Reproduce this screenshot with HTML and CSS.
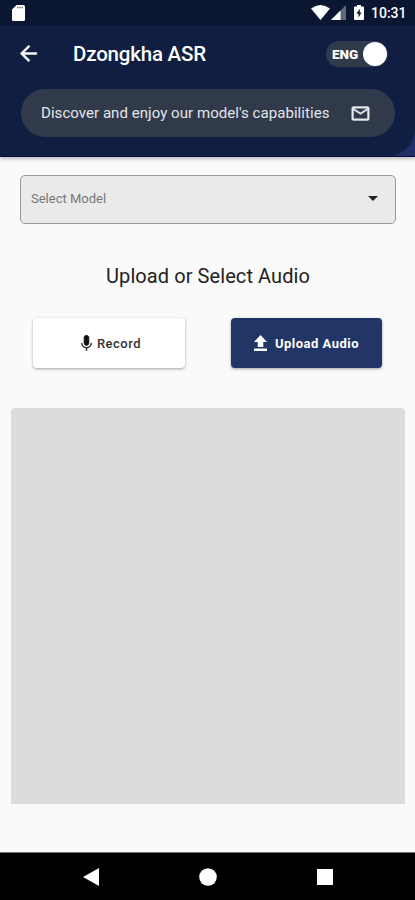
FILE: index.html
```html
<!DOCTYPE html>
<html lang="en">
<head>
  <meta charset="UTF-8" />
  <meta name="viewport" content="width=device-width, initial-scale=1.0" />
  <title>Dzongkha ASR</title>
  <link rel="stylesheet" href="styles.css">
</head>
<body>

  <div class="header-wrap">
    <header class="header">
      <!-- Status bar -->
      <div class="status-bar">
        <svg class="sd-card" width="13" height="16" viewBox="0 0 13 16">
          <path d="M4.6 0H11.5Q13 0 13 1.5V14.5Q13 16 11.5 16H1.500Q0 16 0 14.500V4.500Z" fill="#fff" />
          <path d="M5 2.500H11.500" stroke="#777" stroke-width="1.500" stroke-dasharray="1.500 .7" />
        </svg>
        <div class="status-icons">
          <svg width="19" height="15" viewBox="0 0 19 15">
            <path d="M0 3.600Q9.500-3.600 19 3.600L9.500 15Z" fill="#fff" />
          </svg>
          <svg class="signal" width="15" height="15" viewBox="0 0 15 15">
            <path d="M0 15L15 0V15Z" fill="#5d687c" />
            <path d="M0 15L9.500 5.500V15Z" fill="#fff" />
          </svg>
          <svg class="battery" width="10" height="15" viewBox="0 0 10 15">
            <path d="M3 0H7V1.500H9Q10 1.500 10 2.500V14Q10 15 9 15H1Q0 15 0 14V2.500Q0 1.500 1 1.500H3Z" fill="#fff" />
            <path d="M5.800 3.800L2.500 8.800H4.500V12.500L7.600 7.500H5.800Z" fill="#0b1730" />
          </svg>
          <span class="clock">10:31</span>
        </div>
      </div>

      <!-- App bar -->
      <div class="app-bar">
        <svg class="back" width="25" height="25" viewBox="0 0 24 24">
          <path d="M20 11H7.830l5.590-5.590L12 4l-8 8 8 8 1.410-1.410L7.830 13H20v-2z" fill="#fff" stroke="#fff" stroke-width=".4" />
        </svg>
        <h1 class="title">Dzongkha ASR</h1>
        <div class="lang-switch">
          <span class="lang">ENG</span>
          <span class="knob"></span>
        </div>
      </div>

      <div class="banner">
        <span class="banner-text">Discover and enjoy our model's capabilities</span>
        <svg width="21" height="21" viewBox="0 0 24 24">
          <path d="M20 4H4c-1.100 0-1.990.9-1.990 2L2 18c0 1.100.9 2 2 2h16c1.100 0 2-.9 2-2V6c0-1.100-.9-2-2-2zm0 14H4V8l8 5 8-5v10zm-8-7L4 6h16l-8 5z" fill="#e8eaed" stroke="#e8eaed" stroke-width=".5" />
        </svg>
      </div>
    </header>
  </div>

  <main class="content">
    <div class="select">
      <span class="placeholder">Select Model</span>
      <svg width="10" height="5" viewBox="0 0 10 5">
        <path d="M0 0H10L5 5Z" fill="#222" />
      </svg>
    </div>

    <h2 class="heading">Upload or Select Audio</h2>

    <div class="buttons">
      <button class="btn btn-record">
        <svg width="11" height="16" viewBox="5 2 14 20">
          <path d="M12 15c1.660 0 3-1.340 3-3V5c0-1.660-1.340-3-3-3S9 3.340 9 5v7c0 1.660 1.340 3 3 3z" fill="#111" stroke="#111" />
          <path d="M17.300 12c0 3-2.540 5.100-5.300 5.100S6.700 15 6.700 12H5c0 3.410 2.720 6.230 6 6.720V22h2v-3.280c3.280-.48 6-3.300 6-6.720h-1.700z" fill="#333" />
        </svg>
        <span>Record</span>
      </button>
      <button class="btn btn-upload">
        <svg width="13" height="16" viewBox="0 0 13 16">
          <path d="M6.500 0L13 7H9.300V12H3.700V7H0ZM0 13.500H13V16H0Z" fill="#fff" />
        </svg>
        <span>Upload Audio</span>
      </button>
    </div>

    <div class="output"></div>
  </main>

  <!-- System navigation -->
  <nav class="nav-bar">
    <svg width="16" height="18" viewBox="0 0 16 18"><path d="M0 9L16 0V18Z" fill="#fff" /></svg>
    <svg width="18" height="18" viewBox="0 0 18 18"><circle cx="9" cy="9" r="8.800" fill="#fff" /></svg>
    <svg width="16" height="16" viewBox="0 0 16 16"><path d="M0 0H16V16H0Z" fill="#fff" /></svg>
  </nav>

</body>
</html>
```
FILE: styles.css
```css
* {
  box-sizing: border-box;
}

body {
  margin: 0;
  height: 900px;
  display: flex;
  flex-direction: column;
  font-family: Roboto, sans-serif;
  background-color: #fafafa;
  overflow: hidden;
}

svg {
  display: block;
  flex-shrink: 0;
}

.header-wrap {
  height: 157px;
  background-color: #1f3068;
  border-bottom: 1px solid #0b0b43;
  box-shadow: 0 2px 4px rgba(0, 0, 0, 0.25);
}

.header {
  height: 156px;
  background-color: #0f1e41;
  border-bottom-right-radius: 27px;
}

.status-bar {
  height: 25px;
  display: flex;
  justify-content: space-between;
  padding: 5px 8px 0 12px;
  background-color: #0b1730;
}

.status-icons {
  display: flex;
}

.signal {
  margin-left: 1px;
}

.battery {
  margin-left: 8px;
}

.clock {
  width: 36px;
  margin-left: 7px;
  color: #fff;
  font-size: 14px;
  font-weight: 500;
  line-height: 17px;
  white-space: nowrap;
}

.app-bar {
  height: 57px;
  display: flex;
  align-items: center;
  padding: 0 27px 0 16px;
}

.title {
  margin: 0 auto 0 32px;
  color: #fff;
  font-size: 20.5px;
  font-weight: 500;
  letter-spacing: -0.2px;
  white-space: nowrap;
}

.lang-switch {
  width: 62px;
  height: 26px;
  display: flex;
  align-items: center;
  justify-content: space-between;
  padding: 0 1px 0 6px;
  border-radius: 13px;
  background-color: #303a4b;
}

.lang {
  color: #fff;
  font-size: 13.5px;
  font-weight: 900;
}

.knob {
  width: 24px;
  height: 24px;
  border-radius: 50%;
  background-color: #fff;
}

.banner {
  height: 48px;
  display: flex;
  align-items: center;
  justify-content: space-between;
  margin: 7px 20px 0 21px;
  padding: 0 24px 0 20px;
  border-radius: 24px;
  background-color: #303a4b;
}

.banner-text {
  color: #e3e5e8;
  font-size: 15px;
  letter-spacing: 0.05px;
  white-space: nowrap;
}

.content {
  flex: 1;
  padding: 18px 19px 0 20px;
}

.select {
  height: 49px;
  display: flex;
  align-items: center;
  justify-content: space-between;
  padding: 0 17px 2px 10px;
  border: 1px solid #999;
  border-radius: 5px;
  background-color: #eaeaea;
}

.placeholder {
  color: #777;
  font-size: 13px;
}

.heading {
  margin: 40px 0 0;
  color: #222;
  font-size: 20px;
  font-weight: 400;
  letter-spacing: 0.08px;
  line-height: 24px;
  text-align: center;
}

.buttons {
  display: flex;
  justify-content: space-between;
  margin: 30px 14px 0 13px;
}

.btn {
  height: 50px;
  display: flex;
  align-items: center;
  justify-content: center;
  padding: 0;
  border: none;
  border-radius: 4px;
  font-family: inherit;
  font-size: 13px;
  box-shadow: 0 1px 3px rgba(0, 0, 0, 0.35);
}

.btn-record {
  width: 152px;
  gap: 5px;
  padding-left: 4px;
  color: #333;
  background-color: #fff;
  font-weight: 500;
  letter-spacing: 0.5px;
}

.btn-upload {
  width: 151px;
  gap: 8px;
  color: #fff;
  background-color: #213566;
  font-weight: 700;
  letter-spacing: 0.5px;
}

.output {
  height: 396px;
  margin: 40px -9px 0 -9px;
  border-radius: 4px 4px 0 0;
  background-color: #dcdcdc;
}

.nav-bar {
  height: 48px;
  display: flex;
  align-items: center;
  justify-content: space-between;
  padding: 0 82px 0 83px;
  border-top: 1px solid #777;
  background-color: #000;
}
```
